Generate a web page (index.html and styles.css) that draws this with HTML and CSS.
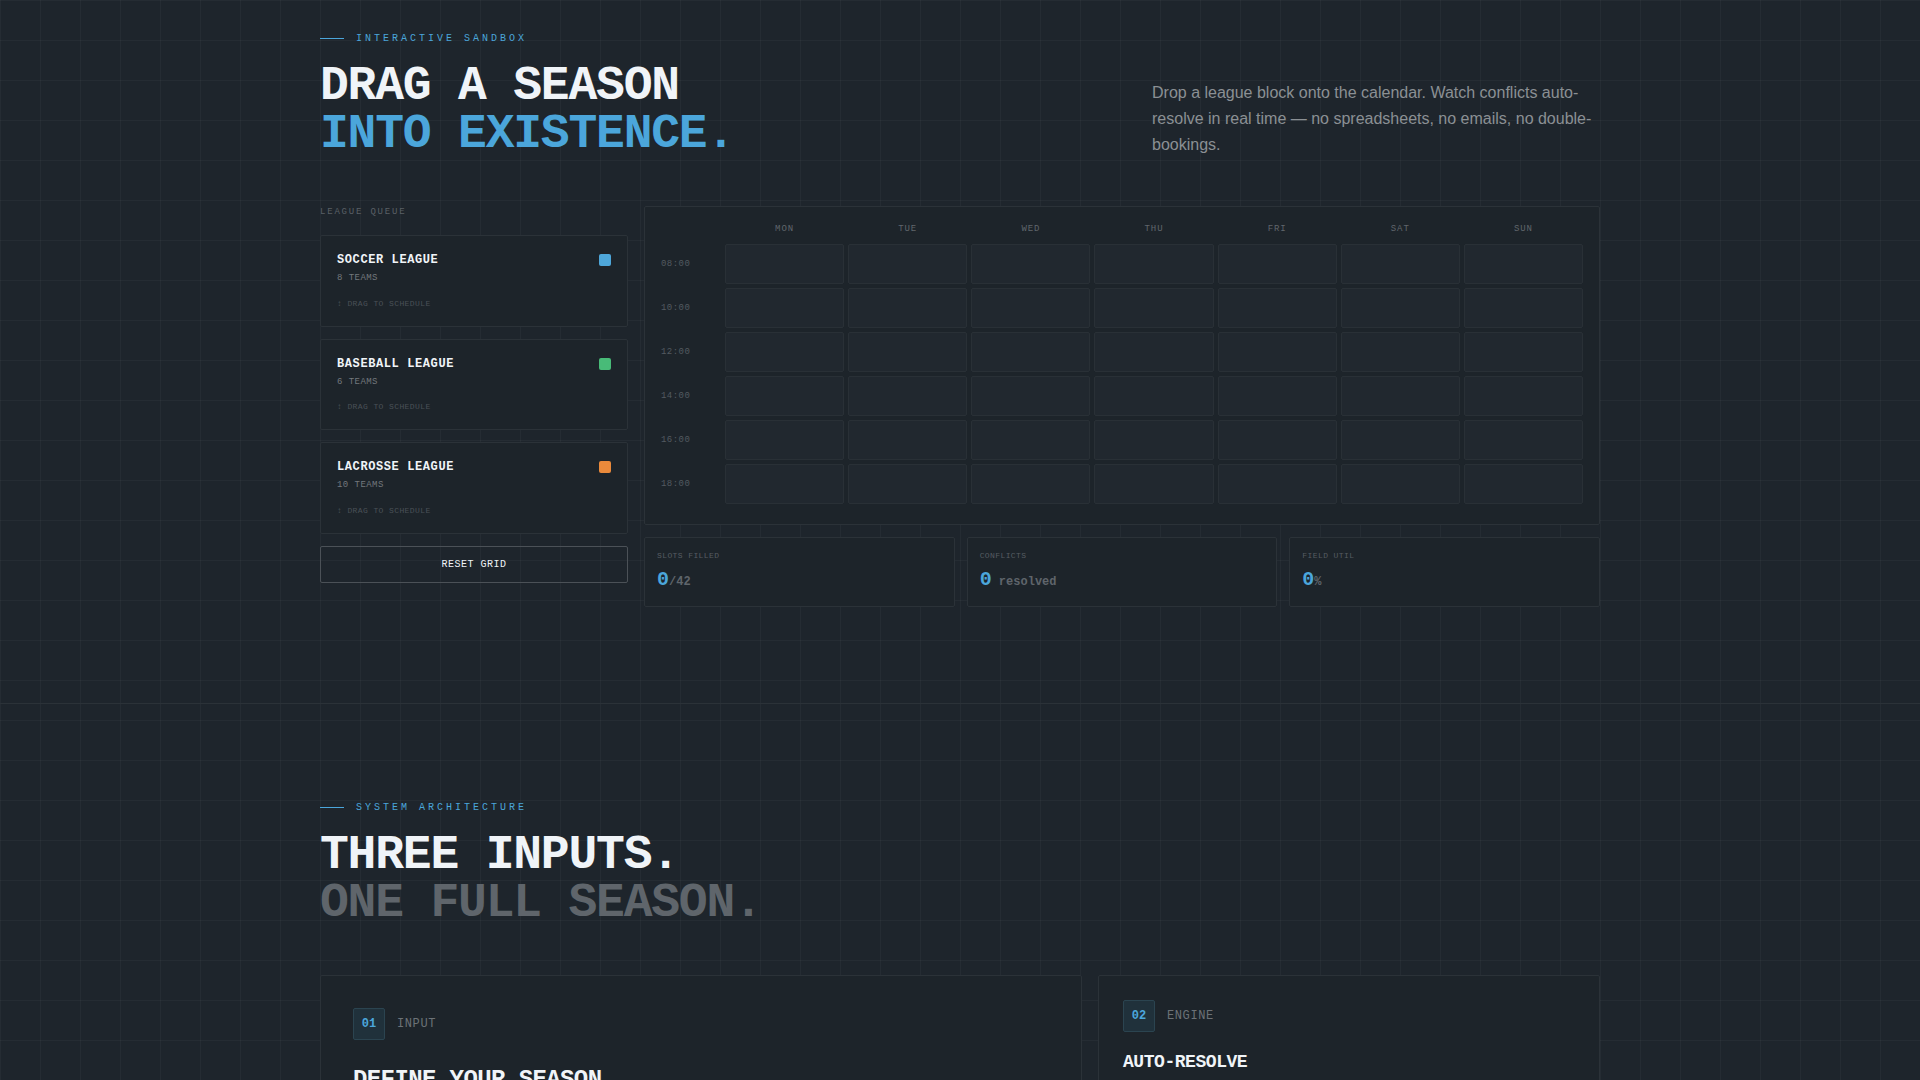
FILE: index.html
```html
<!DOCTYPE html>
<html lang="en">
<head>
<meta charset="utf-8">
<title>League scheduling sandbox</title>
<link rel="stylesheet" href="styles.css">
<script src="calendar.js" defer></script>
</head>
<body>
<main>
  <section class="section section-sandbox">
    <div class="container">
      <header class="section-head">
        <div>
          <p class="eyebrow">INTERACTIVE SANDBOX</p>
          <h2 class="headline">DRAG A SEASON<br><span class="accent">INTO EXISTENCE.</span></h2>
        </div>
        <p class="lede">Drop a league block onto the calendar. Watch conflicts auto-resolve in real time — no spreadsheets, no emails, no double-bookings.</p>
      </header>
      <div class="sandbox">
        <aside class="queue">
          <h3 class="queue-label">LEAGUE QUEUE</h3>
          <div class="queue-list">
            <article class="league" draggable="true">
              <div class="league-top"><h4>SOCCER LEAGUE</h4><span class="swatch blue"></span></div>
              <p class="teams">8 TEAMS</p>
              <p class="hint">↕ DRAG TO SCHEDULE</p>
            </article>
            <article class="league" draggable="true">
              <div class="league-top"><h4>BASEBALL LEAGUE</h4><span class="swatch green"></span></div>
              <p class="teams">6 TEAMS</p>
              <p class="hint">↕ DRAG TO SCHEDULE</p>
            </article>
            <article class="league" draggable="true">
              <div class="league-top"><h4>LACROSSE LEAGUE</h4><span class="swatch orange"></span></div>
              <p class="teams">10 TEAMS</p>
              <p class="hint">↕ DRAG TO SCHEDULE</p>
            </article>
            <button class="reset" type="button">RESET GRID</button>
          </div>
        </aside>
        <div class="board">
          <div class="panel calendar">
            <table>
              <thead>
                <tr><td></td><th scope="col">MON</th><th scope="col">TUE</th><th scope="col">WED</th><th scope="col">THU</th><th scope="col">FRI</th><th scope="col">SAT</th><th scope="col">SUN</th></tr>
              </thead>
              <tbody>
                <tr><th scope="row">08:00</th></tr>
                <tr><th scope="row">10:00</th></tr>
                <tr><th scope="row">12:00</th></tr>
                <tr><th scope="row">14:00</th></tr>
                <tr><th scope="row">16:00</th></tr>
                <tr><th scope="row">18:00</th></tr>
              </tbody>
            </table>
          </div>
          <div class="stats">
            <div class="panel stat"><p class="stat-label">SLOTS FILLED</p><p class="stat-value">0<span>/42</span></p></div>
            <div class="panel stat"><p class="stat-label">CONFLICTS</p><p class="stat-value">0<span> resolved</span></p></div>
            <div class="panel stat"><p class="stat-label">FIELD UTIL</p><p class="stat-value">0<span>%</span></p></div>
          </div>
        </div>
      </div>
    </div>
  </section>
  <section class="section section-system">
    <div class="container">
      <header class="section-head">
        <div>
          <p class="eyebrow">SYSTEM ARCHITECTURE</p>
          <h2 class="headline">THREE INPUTS.<br><span class="muted">ONE FULL SEASON.</span></h2>
        </div>
      </header>
      <div class="steps">
        <article class="panel step step-large">
          <div class="step-head"><span class="badge">01</span><span class="step-kind">INPUT</span></div>
          <h3>DEFINE YOUR SEASON</h3>
        </article>
        <article class="panel step">
          <div class="step-head"><span class="badge">02</span><span class="step-kind">ENGINE</span></div>
          <h3>AUTO-RESOLVE</h3>
        </article>
      </div>
    </div>
  </section>
</main>
</body>
</html>
```
FILE: styles.css
```css
:root {
  --bg: #1e252c;
  --panel: #1d242a;
  --line: #2b3238;
  --cell: #21282f;
  --white: #f0f4f8;
  --blue: #4ba6db;
  --mono: "Liberation Mono", "Courier New", monospace;
  --sans: "Liberation Sans", Arial, sans-serif;
}

* { box-sizing: border-box; margin: 0; padding: 0; }

body {
  height: 100vh;
  overflow: hidden;
  background-color: var(--bg);
  background-image:
    linear-gradient(rgba(255, 255, 255, 0.03) 1px, transparent 1px),
    linear-gradient(90deg, rgba(255, 255, 255, 0.03) 1px, transparent 1px);
  background-size: 40px 40px;
  color: var(--white);
  font-family: var(--mono);
  line-height: 1.5;
}

.container { max-width: 1280px; margin: 0 auto; }

.section-sandbox { padding: 31px 24px 96px; border-bottom: 1px solid var(--line); }
.section-system { padding: 96px 24px; }

.section-head {
  display: flex;
  align-items: flex-end;
  justify-content: space-between;
  margin-bottom: 48px;
}

.eyebrow {
  display: flex;
  align-items: center;
  gap: 12px;
  margin-bottom: 16px;
  color: var(--blue);
  font-size: 10px;
  letter-spacing: 0.3em;
}
.eyebrow::before { content: ""; width: 24px; height: 1px; background: var(--blue); }

.headline {
  font-size: 48px;
  line-height: 48px;
  letter-spacing: -0.025em;
}
.accent { color: var(--blue); }
.muted { color: #5f656b; }

.lede {
  width: 448px;
  color: #8b9094;
  font-family: var(--sans);
  font-size: 16px;
  line-height: 26px;
}

.panel { background: var(--panel); border: 1px solid var(--line); border-radius: 2px; }

.sandbox {
  display: grid;
  grid-template-columns: 308px minmax(0, 1fr);
  align-items: start;
  gap: 16px;
}

.queue-label {
  margin-bottom: 16px;
  color: #5a6066;
  font-size: 9px;
  font-weight: 400;
  line-height: 13px;
  letter-spacing: 0.2em;
}
.queue-list { display: flex; flex-direction: column; gap: 12px; }

.league {
  padding: 16px;
  background: var(--panel);
  border: 1px solid var(--line);
  border-radius: 2px;
  cursor: grab;
}
.league-top {
  display: flex;
  align-items: center;
  justify-content: space-between;
  margin-bottom: 4px;
}
.league h4 { font-size: 12px; line-height: 16px; letter-spacing: 0.05em; }
.swatch { width: 12px; height: 12px; border-radius: 2px; }
.blue { background: #4ea7da; }
.green { background: #48bb78; }
.orange { background: #ea8a3b; }
.teams { color: #73787d; font-size: 9px; letter-spacing: 0.05em; }
.hint { margin-top: 12px; color: #4a5157; font-size: 8px; letter-spacing: 0.05em; }

.reset {
  padding: 10px 16px;
  background: transparent;
  border: 1px solid #4b5157;
  border-radius: 2px;
  color: var(--white);
  font-family: inherit;
  font-size: 10px;
  line-height: 15px;
  letter-spacing: 0.05em;
}

.board { display: flex; flex-direction: column; gap: 12px; }
.calendar { padding: 16px; }
.calendar table,
.calendar thead,
.calendar tbody { display: block; }
.calendar tr {
  display: grid;
  grid-template-columns: 60px repeat(7, minmax(0, 1fr));
  gap: 4px;
  margin-bottom: 4px;
}
.calendar th { color: #60666c; font-size: 9px; font-weight: 400; }
.calendar thead th { padding-bottom: 4px; line-height: 13px; letter-spacing: 0.1em; }
.calendar tbody th { color: #535a60; line-height: 41px; text-align: left; letter-spacing: 0.05em; }
.calendar tbody tr { height: 40px; }
.slot {
  height: 40px;
  background: var(--cell);
  border: 1px solid #293036;
  border-radius: 2px;
}

.stats { display: grid; grid-template-columns: repeat(3, minmax(0, 1fr)); gap: 12px; }
.stat { padding: 12px; }
.stat-label { margin-bottom: 4px; color: #565c62; font-size: 8px; letter-spacing: 0.05em; }
.stat-value { color: var(--blue); font-size: 20px; font-weight: 700; line-height: 28px; }
.stat-value span { color: #5f656b; font-size: 12px; line-height: 16px; }

.steps { display: grid; grid-template-columns: 762fr 502fr; gap: 16px; }
.step { min-height: 320px; padding: 24px; }
.step-large { padding: 32px; }
.step-head { display: flex; align-items: center; gap: 12px; margin-bottom: 16px; }
.step-large .step-head { margin-bottom: 24px; }
.badge {
  display: flex;
  align-items: center;
  justify-content: center;
  width: 32px;
  height: 32px;
  background: #20313b;
  border: 1px solid #2b4450;
  border-radius: 2px;
  color: var(--blue);
  font-size: 12px;
  font-weight: 700;
}
.step-kind { color: #6c7277; font-size: 12px; letter-spacing: 0.05em; }
.step h3 { font-size: 18px; line-height: 28px; letter-spacing: -0.025em; }
.step-large h3 { font-size: 24px; line-height: 32px; }
```
FILE: calendar.js
```js
// Fill every time row with one empty slot per weekday.
document.querySelectorAll(".calendar tbody tr").forEach((row) => {
  for (let day = 0; day < 7; day += 1) {
    const slot = document.createElement("td");
    slot.className = "slot";
    row.append(slot);
  }
});
```
